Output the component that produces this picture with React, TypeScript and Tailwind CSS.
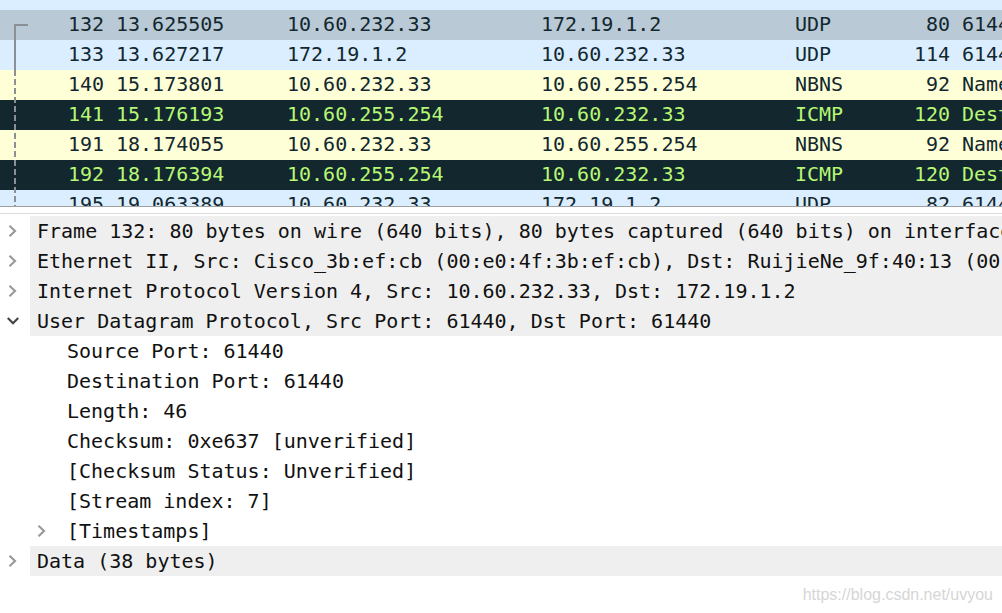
import React from "react";

type Pkt = {
  no: string;
  time: string;
  src: string;
  dst: string;
  proto: string;
  len: string;
  info: string;
  kind: "udp" | "sel" | "nbns" | "icmp";
};

const packets: Pkt[] = [
  { no: "132", time: "13.625505", src: "10.60.232.33", dst: "172.19.1.2", proto: "UDP", len: "80", info: "61440 → 61440 Len=38", kind: "sel" },
  { no: "133", time: "13.627217", src: "172.19.1.2", dst: "10.60.232.33", proto: "UDP", len: "114", info: "61440 → 61440 Len=72", kind: "udp" },
  { no: "140", time: "15.173801", src: "10.60.232.33", dst: "10.60.255.254", proto: "NBNS", len: "92", info: "Name query NBSTAT *<00>", kind: "nbns" },
  { no: "141", time: "15.176193", src: "10.60.255.254", dst: "10.60.232.33", proto: "ICMP", len: "120", info: "Destination unreachable", kind: "icmp" },
  { no: "191", time: "18.174055", src: "10.60.232.33", dst: "10.60.255.254", proto: "NBNS", len: "92", info: "Name query NBSTAT *<00>", kind: "nbns" },
  { no: "192", time: "18.176394", src: "10.60.255.254", dst: "10.60.232.33", proto: "ICMP", len: "120", info: "Destination unreachable", kind: "icmp" },
  { no: "195", time: "19.063389", src: "10.60.232.33", dst: "172.19.1.2", proto: "UDP", len: "82", info: "61440 → 61440 Len=40", kind: "udp" },
];

const rowStyle: Record<Pkt["kind"], string> = {
  udp: "bg-[#daeeff] text-[#12272e]",
  sel: "bg-[#b9c9d6] text-[#12272e]",
  nbns: "bg-[#fefed7] text-[#12272e]",
  icmp: "bg-[#12272e] text-[#b7f774]",
};

function Chevron({ open }: { open?: boolean }) {
  return (
    <svg width="12" height="12" viewBox="0 0 12 12" className="shrink-0">
      {open ? (
        <polyline points="0.8,3 6,8.2 11.2,3" fill="none" stroke="#444" strokeWidth="2.2" />
      ) : (
        <polyline points="2.5,0.8 8,6 2.5,11.2" fill="none" stroke="#9a9a9a" strokeWidth="2.2" />
      )}
    </svg>
  );
}

function TreeRow({
  text,
  level = 0,
  chevron,
  band,
}: {
  text: string;
  level?: number;
  chevron?: "open" | "closed";
  band?: boolean;
}) {
  return (
    <div className="flex h-[30px] items-center">
      <div className={"shrink-0 " + (level === 0 ? "w-[30px]" : "w-[60px]")}>
        {chevron && (
          <div className={level === 0 ? "pl-[7px]" : "pl-[36px]"}>
            <Chevron open={chevron === "open"} />
          </div>
        )}
      </div>
      <div className={"flex-1 min-w-0 h-full flex items-center pl-[7px] whitespace-pre overflow-hidden " + (band ? "bg-[#efefef]" : "")}>
        {text}
      </div>
    </div>
  );
}

export default function App() {
  return (
    <div className="w-[1002px] h-[613px] overflow-hidden bg-white text-[20px] font-['DejaVu_Sans_Mono',monospace]">
      {/* packet list */}
      <div className="relative h-[206px] overflow-hidden">
        <div className="h-[10px] bg-[#daeeff]" />
        {packets.map((p) => (
          <div key={p.no} className={"flex h-[30px] items-center whitespace-pre pb-[2px] " + rowStyle[p.kind]}>
            <div className="shrink-0 w-[104px] text-right">{p.no}</div>
            <div className="shrink-0 w-[183px] pl-3">{p.time}</div>
            <div className="shrink-0 w-[254px]">{p.src}</div>
            <div className="shrink-0 w-[254px]">{p.dst}</div>
            <div className="shrink-0 w-[75px]">{p.proto}</div>
            <div className="shrink-0 w-[80px] text-right">{p.len}</div>
            <div className="shrink-0 pl-3">{p.info}</div>
          </div>
        ))}
        {/* related packet indicator */}
        <div className="absolute left-[14px] top-[24px] w-[14px] h-[2px] bg-[#8a9096]" />
        <div className="absolute left-[14px] top-[24px] w-[2px] h-[46px] bg-[#8a9096]" />
        <div className="absolute left-[14px] top-[70px] w-[2px] h-[136px] bg-[repeating-linear-gradient(to_bottom,#8a9096_0px,#8a9096_6px,transparent_6px,transparent_9px)]" />
      </div>

      {/* splitter */}
      <div className="h-px bg-[#a0a0a0]" />
      <div className="h-[6px] bg-white" />
      <div className="h-px bg-[#dcdcdc]" />

      {/* details tree */}
      <div className="pt-[2px] text-[#111]">
        <TreeRow band chevron="closed" text="Frame 132: 80 bytes on wire (640 bits), 80 bytes captured (640 bits) on interface 0" />
        <TreeRow band chevron="closed" text="Ethernet II, Src: Cisco_3b:ef:cb (00:e0:4f:3b:ef:cb), Dst: RuijieNe_9f:40:13 (00:74:9c:9f:40:13)" />
        <TreeRow band chevron="closed" text="Internet Protocol Version 4, Src: 10.60.232.33, Dst: 172.19.1.2" />
        <TreeRow band chevron="open" text="User Datagram Protocol, Src Port: 61440, Dst Port: 61440" />
        <TreeRow level={1} text="Source Port: 61440" />
        <TreeRow level={1} text="Destination Port: 61440" />
        <TreeRow level={1} text="Length: 46" />
        <TreeRow level={1} text="Checksum: 0xe637 [unverified]" />
        <TreeRow level={1} text="[Checksum Status: Unverified]" />
        <TreeRow level={1} text="[Stream index: 7]" />
        <TreeRow level={1} chevron="closed" text="[Timestamps]" />
        <TreeRow band chevron="closed" text="Data (38 bytes)" />
      </div>

      <div className="flex justify-end pr-[9px] pt-[7px]">
        <span className="text-[16px] text-[#d6d6d6] font-['Liberation_Sans',Arial,sans-serif]">https://blog.csdn.net/uvyou</span>
      </div>
    </div>
  );
}
